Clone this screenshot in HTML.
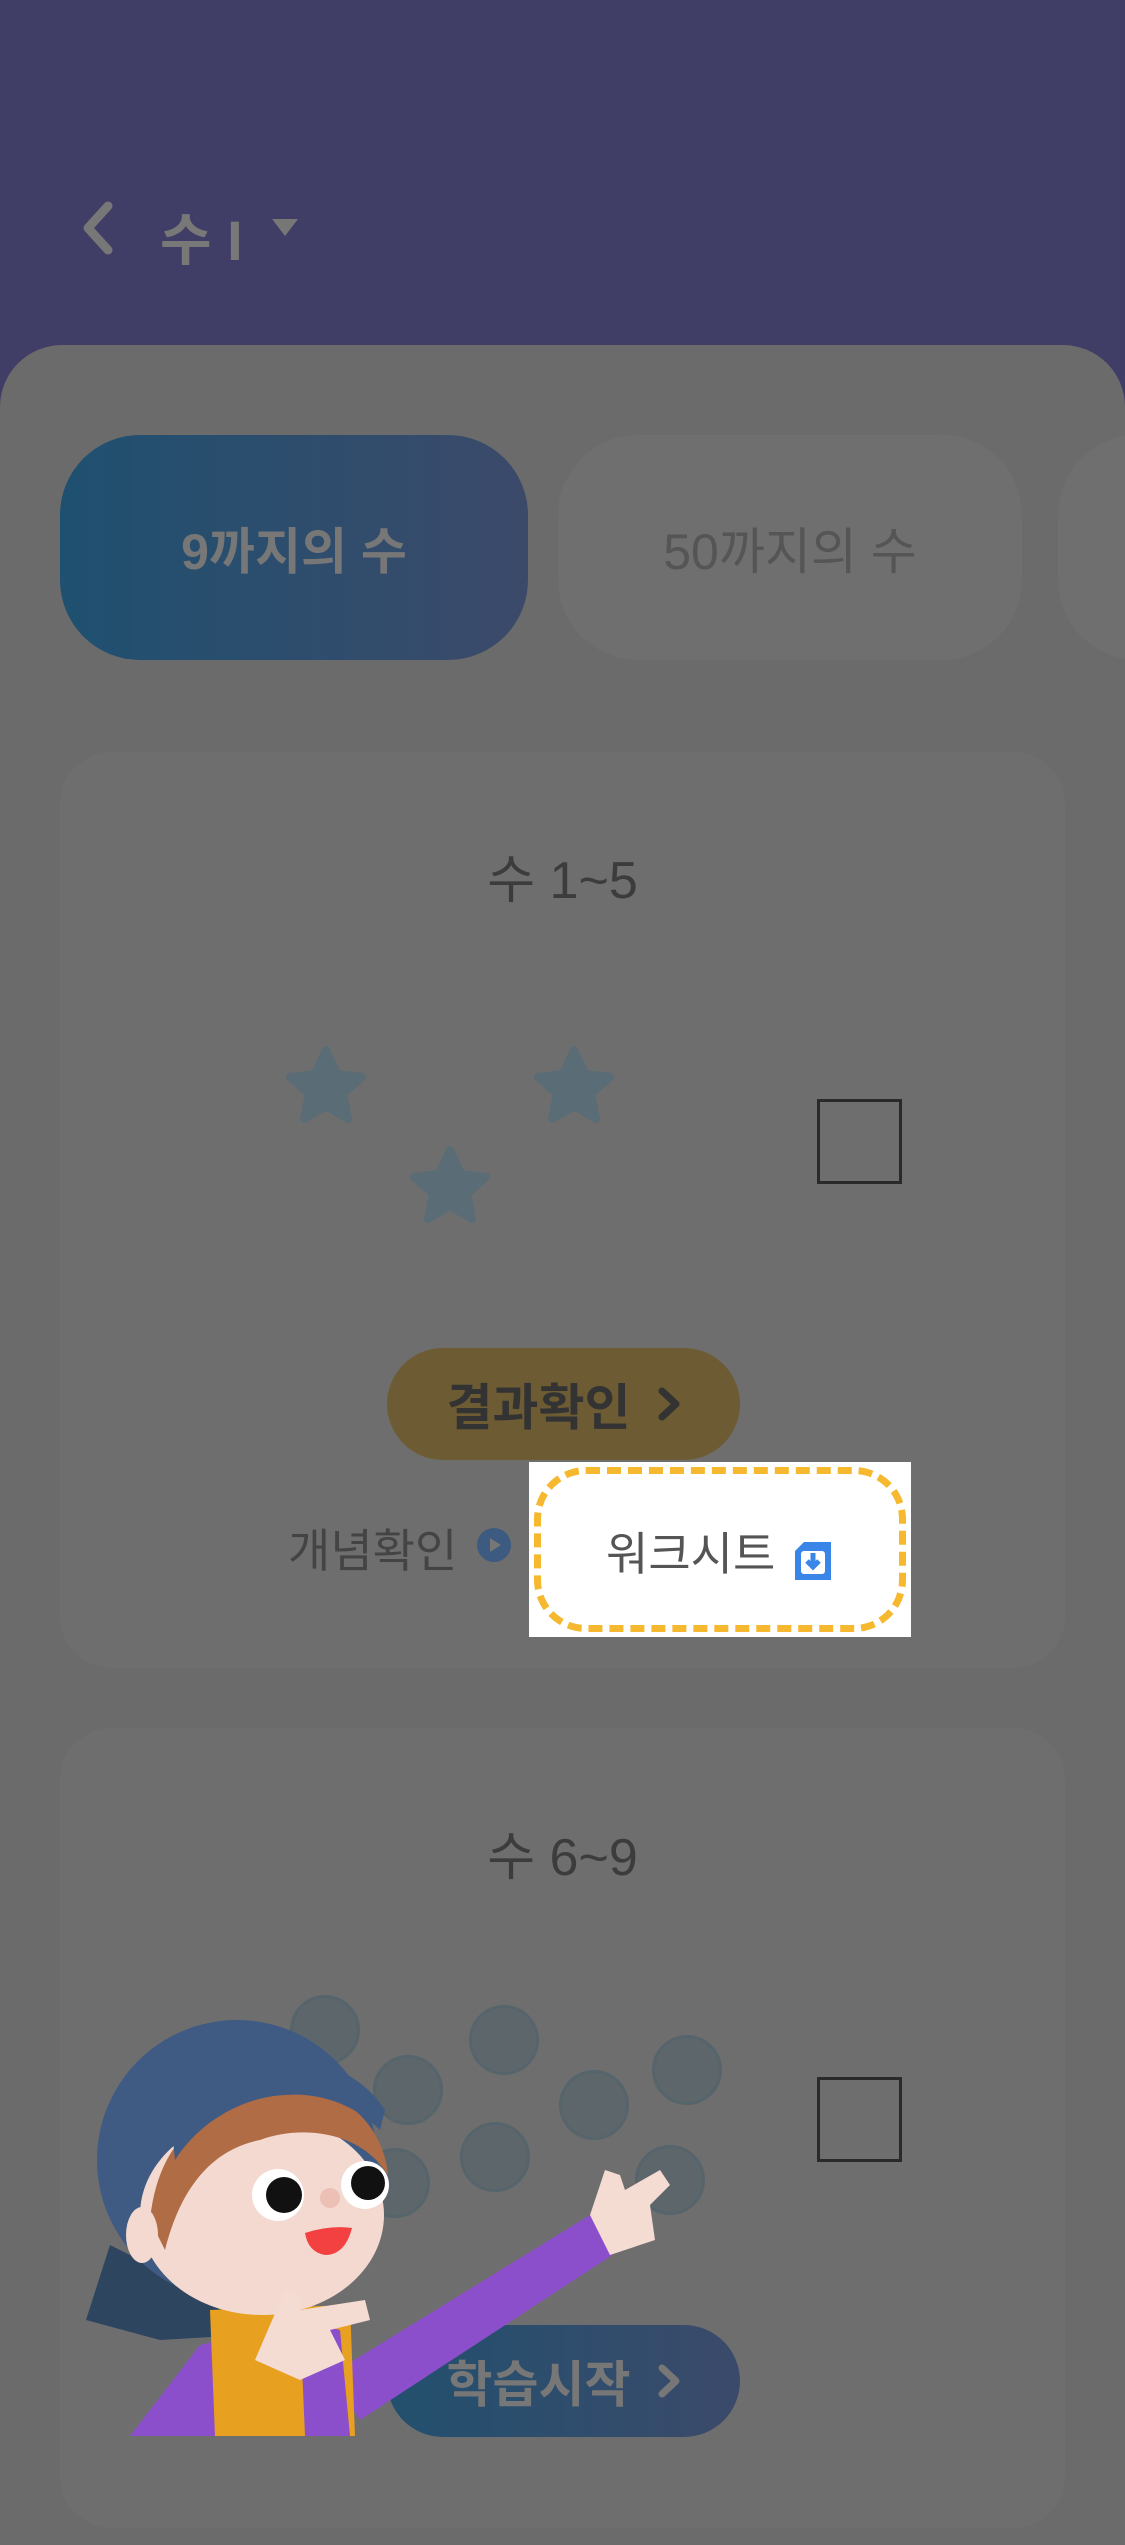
<!DOCTYPE html>
<html><head><meta charset="utf-8"><style>
*{margin:0;padding:0;box-sizing:border-box}
body{width:1125px;height:2436px;overflow:hidden;background:#403d66;font-family:"Liberation Sans","Noto Sans CJK KR",sans-serif;position:relative}
.abs{position:absolute}
.panel{left:0;top:345px;width:1125px;height:2200px;background:#6b6b6b;border-radius:62px 62px 0 0}
.tab{top:435px;height:225px;border-radius:80px;display:flex;align-items:center;justify-content:center;font-size:50px;font-weight:bold}
.card{left:60px;width:1005px;background:#6e6e6e;border-radius:52px}
.ttl{width:1125px;left:0;text-align:center;font-size:52px;color:#3c3c3c}
.sq{width:85px;height:85px;border:3px solid #2a2a2a}
.btn{left:387px;width:353px;height:112px;border-radius:56px;display:flex;align-items:center;justify-content:center;font-size:50px;font-weight:bold}
.btn svg{margin-left:26px}
.dot{width:70px;height:70px;border-radius:50%;background:#5d666b;border:3px solid #56646b}
</style></head><body>
<svg class="abs" style="left:78px;top:200px" width="40" height="56"><path d="M30 6 L10 28 L30 50" stroke="#777" stroke-width="9" fill="none" stroke-linecap="round" stroke-linejoin="round"/></svg>
<div class="abs" style="left:160px;top:196px;font-size:56px;color:#787878;font-weight:bold">수 I</div>
<svg class="abs" style="left:272px;top:219px" width="26" height="18"><path d="M0 0H26L13 17Z" fill="#777"/></svg>
<div class="abs panel"></div>
<div class="abs tab" style="left:60px;width:468px;background:linear-gradient(90deg,#1f5070,#3c4a6a);color:#777">9까지의 수</div>
<div class="abs tab" style="left:558px;width:464px;background:#6f6f6f;color:#555;font-weight:normal">50까지의 수</div>
<div class="abs tab" style="left:1058px;width:200px;background:#6f6f6f"></div>

<div class="abs card" style="top:752px;height:916px"></div>
<div class="abs ttl" style="top:838px">수 1~5</div>
<svg class="abs" style="left:280px;top:1040px" width="350" height="200">
<g fill="#5a6c76" stroke="#5a6c76" stroke-width="8" stroke-linejoin="round">
<path d="M46 10 L57 34 L82 37 L63 54 L68 79 L46 66 L24 79 L29 54 L10 37 L35 34Z"/>
<path transform="translate(248,0)" d="M46 10 L57 34 L82 37 L63 54 L68 79 L46 66 L24 79 L29 54 L10 37 L35 34Z"/>
<path transform="translate(124,100)" d="M46 10 L57 34 L82 37 L63 54 L68 79 L46 66 L24 79 L29 54 L10 37 L35 34Z"/>
</g></svg>
<div class="abs sq" style="left:817px;top:1099px"></div>
<div class="abs btn" style="top:1348px;background:#6d5c33;color:#333">결과확인<svg width="24" height="36"><path d="M5 5L19 18L5 31" stroke="#333" stroke-width="7" fill="none" stroke-linecap="round" stroke-linejoin="round"/></svg></div>
<div class="abs" style="left:288px;top:1515px;font-size:46px;color:#444">개념확인</div>
<svg class="abs" style="left:476px;top:1527px" width="36" height="36"><circle cx="18" cy="18" r="17" fill="#3d5a80"/><path d="M14 11L25 18L14 25Z" fill="#777"/></svg>
<div class="abs" style="left:529px;top:1462px;width:382px;height:175px;background:#fff"></div>
<div class="abs" style="left:534px;top:1467px;width:372px;height:165px;border:7px dashed #f5b82e;border-radius:52px"></div>
<div class="abs" style="left:606px;top:1518px;font-size:46px;color:#555">워크시트</div>
<svg class="abs" style="left:795px;top:1542px" width="36" height="38"><path d="M9 0H36V38H0V9Z" fill="#3a86e8"/><rect x="6" y="9" width="24" height="23" rx="3" fill="#fff"/><path d="M18 11V24M12 19L18 25L24 19" stroke="#3a86e8" stroke-width="5" fill="none"/></svg>

<div class="abs card" style="top:1728px;height:800px"></div>
<div class="abs ttl" style="top:1815px">수 6~9</div>
<div class="abs dot" style="left:290px;top:1995px"></div>
<div class="abs dot" style="left:373px;top:2055px"></div>
<div class="abs dot" style="left:469px;top:2005px"></div>
<div class="abs dot" style="left:559px;top:2070px"></div>
<div class="abs dot" style="left:652px;top:2035px"></div>
<div class="abs dot" style="left:460px;top:2122px"></div>
<div class="abs dot" style="left:635px;top:2145px"></div>
<div class="abs dot" style="left:360px;top:2148px"></div>
<div class="abs sq" style="left:817px;top:2077px"></div>
<div class="abs btn" style="top:2325px;background:linear-gradient(90deg,#22506e,#3b4a6a);color:#777">학습시작<svg width="24" height="36"><path d="M5 5L19 18L5 31" stroke="#777" stroke-width="7" fill="none" stroke-linecap="round" stroke-linejoin="round"/></svg></div>

<svg class="abs" style="left:0;top:2000px" width="700" height="436">
<path d="M86 320 L110 245 L200 290 L245 335 L160 340Z" fill="#2e4560"/>
<circle cx="237" cy="160" r="140" fill="#3f5b84"/>
<path d="M130 436 L200 345 L265 330 L290 370 L220 436Z" fill="#8c4fcc"/>
<path d="M330 375 L590 215 L620 250 L360 420Z" fill="#8c4fcc"/>
<path d="M210 310 L350 305 L355 436 L215 436Z" fill="#e8a020"/>
<path d="M300 320 L340 330 L350 436 L305 436Z" fill="#8c4fcc"/>
<ellipse cx="262" cy="215" rx="122" ry="100" fill="#f3d9d0"/>
<path d="M150 220 C160 120 230 90 320 95 C360 100 385 140 388 175 C360 130 300 125 260 140 C210 150 180 190 165 250Z" fill="#b06c45"/>
<path d="M175 160 C220 90 320 70 380 130 L385 110 C340 40 220 40 170 110Z" fill="#3f5b84"/>
<ellipse cx="142" cy="235" rx="16" ry="28" fill="#f3d9d0"/>
<circle cx="278" cy="195" r="26" fill="#fff"/><circle cx="284" cy="195" r="18" fill="#111"/>
<circle cx="365" cy="185" r="24" fill="#fff"/><circle cx="368" cy="183" r="17" fill="#111"/>
<circle cx="330" cy="198" r="10" fill="#ecc0b5"/>
<path d="M305 233 Q330 225 352 228 Q345 255 325 255 Q308 252 305 233Z" fill="#f34040"/>
<path d="M255 360 L285 290 L300 295 L300 310 L365 300 L370 320 L330 330 L345 360 L300 380Z" fill="#f5dcd3"/>
<path d="M590 215 L605 170 L620 175 L625 190 L660 170 L670 185 L650 205 L655 240 L610 255Z" fill="#f5dcd3"/>
</svg>
</body></html>
